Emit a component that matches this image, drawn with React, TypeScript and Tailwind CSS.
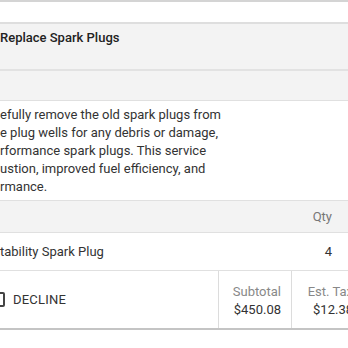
import React from "react";

const descLines = [
  "efully remove the old spark plugs from",
  "e plug wells for any debris or damage,",
  "rformance spark plugs. This service",
  "ustion, improved fuel efficiency, and",
  "rmance.",
];

const App = () => {
  return (
    <div className="w-[348px] h-[348px] bg-white overflow-hidden font-['Roboto',sans-serif] text-[13px]">
      <div className="border-t-2 border-b-2 border-t-[#d4d4d4] border-b-[#c4c4c4]">
        {/* top strip */}
        <div className="h-[22px] bg-white border-b-2 border-[#dedede]" />

        {/* title */}
        <div className="h-[47px] bg-[#f3f3f3] border-b-2 border-[#e2e2e2] pt-[4px]">
          <div className="leading-[20px] font-medium text-[#222]">Replace Spark Plugs</div>
        </div>

        {/* empty gray row */}
        <div className="h-[30px] bg-[#f3f3f3] border-b border-[#e0e0e0]" />

        {/* description */}
        <div className="h-[100px] bg-white border-b border-[#e0e0e0] pt-[5px] text-[#333] leading-[18px]">
          {descLines.map((line, i) => (
            <div key={i} className="whitespace-nowrap">
              {line}
            </div>
          ))}
        </div>

        {/* table header */}
        <div className="h-[32px] bg-[#f3f3f3] border-b border-[#e0e0e0] flex items-center justify-end pr-[16px] text-[#777]">
          Qty
        </div>

        {/* item row */}
        <div className="h-[38px] bg-white border-b border-[#e0e0e0] flex items-center justify-between pr-[16px] text-[#333]">
          <span>tability Spark Plug</span>
          <span>4</span>
        </div>

        {/* footer */}
        <div className="h-[57px] bg-white flex">
          <div className="w-[228px] shrink-0 flex items-center gap-[8px] -ml-[10px]">
            <div className="w-[15px] h-[15px] border-2 border-[#444] rounded-[2px]" />
            <span className="text-[#333] tracking-[0.2px]">DECLINE</span>
          </div>
          <div className="w-[73px] shrink-0 border-l border-[#dcdcdc] flex flex-col justify-center items-end pr-[10px] leading-[18px] pt-[2px]">
            <span className="text-[#888]">Subtotal</span>
            <span className="text-[#333]">$450.08</span>
          </div>
          <div className="w-[72px] shrink-0 border-l border-[#dcdcdc] flex flex-col justify-center items-end pr-[10px] leading-[18px] pt-[2px]">
            <span className="text-[#888]">Est. Tax</span>
            <span className="text-[#333]">$12.38</span>
          </div>
        </div>
      </div>
    </div>
  );
};

export default App;
